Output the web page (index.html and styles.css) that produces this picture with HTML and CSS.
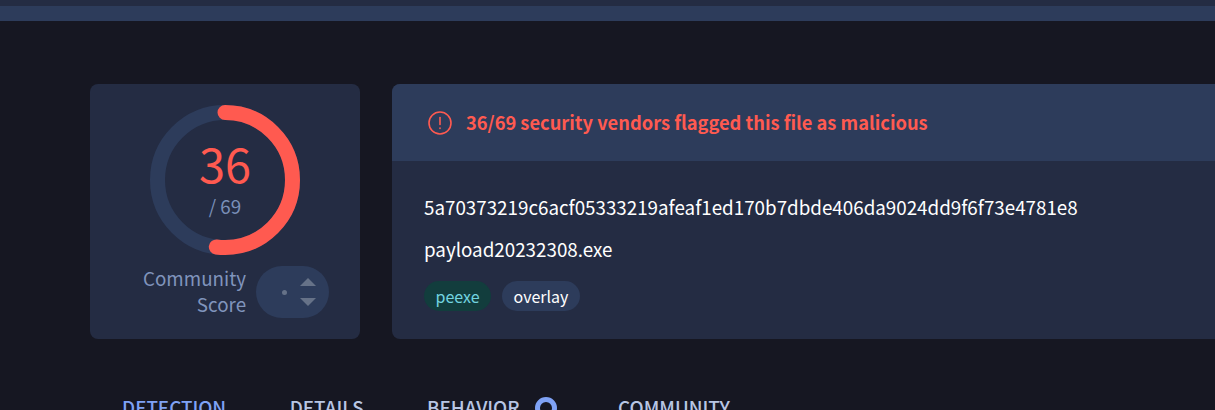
FILE: index.html
```html
<!DOCTYPE html>
<html lang="en">
<head>
  <meta charset="UTF-8" />
  <title>File report</title>
  <link rel="stylesheet" href="styles.css">
</head>
<body>
  <div class="top-bar"></div>
  <div class="sub-bar"></div>

  <main class="report">
    <section class="score-card">
      <div class="ring">
        <svg class="ring-svg" width="150" height="150" viewBox="0 0 150 150">
          <circle cx="75" cy="75" r="67.5" fill="none" stroke="#2d3c5b" stroke-width="15" />
          <circle cx="75" cy="75" r="67.5" fill="none" stroke="#ff5a50" stroke-width="15" stroke-linecap="round"
            stroke-dasharray="220.5 424.1" transform="rotate(-90 75 75)" />
        </svg>
        <div class="ring-label">
          <div class="ring-num">36</div>
          <div class="ring-total">/ 69</div>
        </div>
      </div>
      <div class="community">
        <div class="community-label">Community<br>Score</div>
        <div class="vote">
          <span class="vote-dot"></span>
          <div class="vote-arrows">
            <span class="arrow-up"></span>
            <span class="arrow-down"></span>
          </div>
        </div>
      </div>
    </section>

    <section class="info-card">
      <div class="info-head">
        <svg class="alert-icon" width="24" height="24" viewBox="0 0 24 24" fill="none" stroke="#ff5a50" stroke-width="1.6" stroke-linecap="round">
          <circle cx="12" cy="12" r="11" />
          <path d="M12 6.5v7" />
          <path d="M12 17v.4" />
        </svg>
        <span class="alert-text">36/69 security vendors flagged this file as malicious</span>
      </div>
      <div class="info-body">
        <div class="hash">5a70373219c6acf05333219afeaf1ed170b7dbde406da9024dd9f6f73e4781e8</div>
        <div class="file-name">payload20232308.exe</div>
        <div class="tags">
          <span class="tag tag-green">peexe</span>
          <span class="tag">overlay</span>
        </div>
      </div>
    </section>
  </main>

  <nav class="tabs">
    <a class="tab tab-active">DETECTION</a>
    <a class="tab">DETAILS</a>
    <a class="tab">BEHAVIOR <span class="spinner"></span></a>
    <a class="tab">COMMUNITY</a>
  </nav>
</body>
</html>
```

FILE: styles.css
```css
/* Page */
html, body {
  height: 410px;
  overflow: hidden;
}

body {
  margin: 0;
  background: #161722;
  color: #fff;
  font-family: "Noto Sans CJK SC", "Noto Sans", sans-serif;
}

.top-bar {
  height: 6px;
  background: #242c43;
}

.sub-bar {
  height: 15px;
  background: #2d3c5b;
}

/* Cards row */
.report {
  display: flex;
  gap: 32px;
  padding: 63px 0 0 90px;
  height: 255px;
}

/* Score card */
.score-card {
  flex: 0 0 270px;
  box-sizing: border-box;
  padding-top: 21px;
  background: #242c43;
  border-radius: 8px;
  display: flex;
  flex-direction: column;
  align-items: center;
}

.ring {
  position: relative;
  width: 150px;
  height: 150px;
}

.ring-svg {
  display: block;
}

.ring-label {
  position: absolute;
  inset: 0;
  display: flex;
  flex-direction: column;
  align-items: center;
  justify-content: center;
  gap: 4px;
  padding-bottom: 6px;
  box-sizing: border-box;
}

.ring-num {
  font-size: 47px;
  line-height: 54px;
  color: #ff5a50;
}

.ring-total {
  font-size: 18.8px;
  line-height: 24px;
  color: #7a8fb8;
}

.community {
  display: flex;
  align-items: center;
  gap: 10px;
  margin-top: 11px;
  align-self: flex-start;
  padding-left: 53px;
}

.community-label {
  font-size: 18.8px;
  line-height: 26px;
  margin-top: -2px;
  text-align: right;
  color: #8094bc;
}

.vote {
  width: 73px;
  height: 52px;
  border-radius: 26px;
  background: #2d3c5b;
  display: flex;
  align-items: center;
  justify-content: flex-end;
  gap: 13px;
  padding-right: 13px;
  box-sizing: border-box;
}

.vote-dot {
  width: 5px;
  height: 5px;
  border-radius: 50%;
  background: #667288;
}

.vote-arrows {
  display: flex;
  flex-direction: column;
  gap: 12px;
}

.arrow-up {
  border-left: 8px solid transparent;
  border-right: 8px solid transparent;
  border-bottom: 8px solid #667288;
}

.arrow-down {
  border-left: 8px solid transparent;
  border-right: 8px solid transparent;
  border-top: 8px solid #667288;
}

/* Main info card */
.info-card {
  flex: 1;
  background: #242c43;
  border-radius: 8px 0 0 8px;
  overflow: hidden;
}

.info-head {
  height: 77px;
  background: #2d3c5b;
  display: flex;
  align-items: center;
  gap: 14px;
  padding-left: 36px;
  box-sizing: border-box;
}

.alert-text {
  font-size: 18.3px;
  font-weight: 700;
  margin-top: -2px;
  color: #ff5a50;
}

.info-body {
  padding: 32px 0 0 32px;
}

.hash,
.file-name {
  font-size: 18.8px;
  line-height: 28px;
}

.file-name {
  margin-top: 14px;
}

.tags {
  display: flex;
  gap: 11px;
  margin-top: 18px;
}

.tag {
  font-size: 16px;
  line-height: 30px;
  padding: 0 11.5px;
  border-radius: 15px;
  background: #2d3c5b;
}

.tag-green {
  background: #123d3d;
  color: #72d4e0;
}

/* Tabs, cut off by the window */
.tabs {
  display: flex;
  gap: 63.5px;
  padding: 56px 0 0 122px;
}

.tab {
  font-size: 18.8px;
  font-weight: 500;
  line-height: 24px;
  color: #b8c6e4;
  white-space: nowrap;
  display: flex;
  gap: 15px;
}

.tab-active {
  color: #7fa2f5;
}

.spinner {
  width: 22px;
  height: 22px;
  box-sizing: border-box;
  margin: 2px -2px 0 0;
  border: 5px solid #7fa2f5;
  border-radius: 50%;
}
```
